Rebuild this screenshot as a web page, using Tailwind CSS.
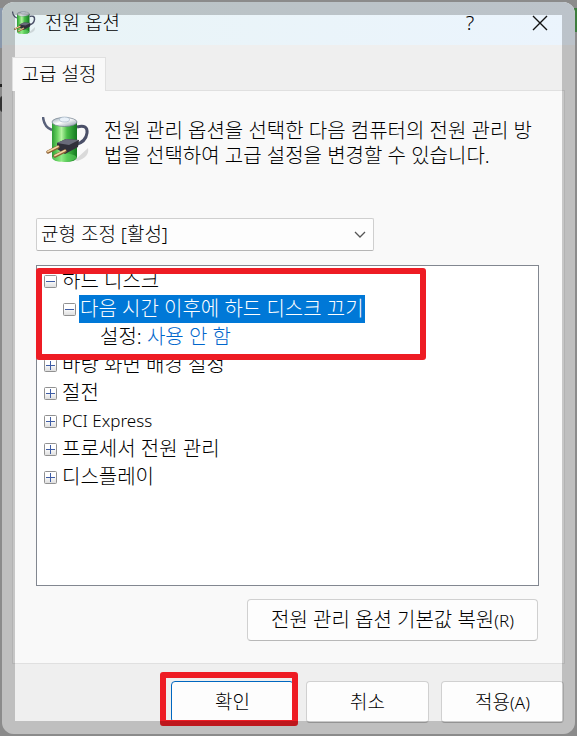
<!DOCTYPE html>
<html lang="ko">
<head>
    <meta charset="UTF-8">
    <meta name="viewport" content="width=device-width, initial-scale=1.0">
    <title>전원 옵션</title>
    <script src="https://cdn.jsdelivr.net/npm/@tailwindcss/browser@4"></script>
</head>
<body class="relative min-h-screen bg-[#8b8b8b] p-[2px] font-['Noto_Sans','Noto_Sans_CJK_KR',sans-serif] text-[19px] font-light text-black">
    <!-- Desktop behind the dialog -->
    <div class="absolute left-0 top-2 h-10 w-[3px] bg-[#8998ac]"></div>
    <div class="absolute left-0 top-[84px] h-[3px] w-[3px] bg-[#222]"></div>
    <div class="absolute left-0 top-[96px] h-4 w-[3px] rounded-l-full bg-[#333]"></div>
    <div class="absolute right-0 top-2 h-6 w-[3px] bg-[#3d7d3d]"></div>

    <!-- Shared icons -->
    <svg class="absolute size-0" aria-hidden="true">
        <defs>
            <linearGradient id="cell" x1="0" x2="1" y1="0" y2="0">
                <stop offset="0" stop-color="#2c9a35"/>
                <stop offset="0.2" stop-color="#63cf5c"/>
                <stop offset="0.38" stop-color="#b5f3a2"/>
                <stop offset="0.6" stop-color="#48bd48"/>
                <stop offset="1" stop-color="#12781f"/>
            </linearGradient>
            <linearGradient id="cap" x1="0" x2="1" y1="0" y2="1">
                <stop offset="0" stop-color="#8fa0ae"/>
                <stop offset="0.45" stop-color="#ffffff"/>
                <stop offset="1" stop-color="#8393a3"/>
            </linearGradient>
            <linearGradient id="toggle" x1="0" x2="0" y1="0" y2="1">
                <stop offset="0.4" stop-color="#ffffff"/>
                <stop offset="1" stop-color="#dcdcdc"/>
            </linearGradient>
        </defs>
        <symbol id="battery" viewBox="0 0 48 48">
            <path d="M33 44 L46 32 Q48 41 35 45 Z" fill="#000" opacity="0.12"/>
            <path d="M1 1 Q2 11 10 14" fill="none" stroke="#59617a" stroke-width="2.5"/>
            <path d="M10 6 V41 Q10 46 22.500 46 Q35 46 35 41 V6 Z" fill="url(#cell)"/>
            <ellipse cx="22.500" cy="41.500" rx="12" ry="4" fill="#6be06c" opacity="0.5"/>
            <ellipse cx="22.500" cy="6" rx="12.500" ry="4.500" fill="url(#cap)" stroke="#71808c" stroke-width="0.700"/>
            <ellipse cx="22.500" cy="3.500" rx="5" ry="2.500" fill="#e9f1f9" stroke="#9aacc0" stroke-width="0.600"/>
            <path d="M35 11 Q46 8 45 17 Q44 26 33 29" fill="none" stroke="#4b5068" stroke-width="3"/>
            <path d="M15 27 L24 23 L37 24 L36 31 L23 38 L15 33 Z" fill="#30303a"/>
            <path d="M15 27 L24 23 L37 24 L27 29 Z" fill="#696b7a"/>
            <path d="M16 31 L6 36 M23 35 L13 40" fill="none" stroke="#8b5e32" stroke-width="3.500" stroke-linecap="round"/>
            <path d="M16 30.500 L6 35.500 M23 34.500 L13 39.500" fill="none" stroke="#f3d3a1" stroke-width="1.800" stroke-linecap="round"/>
        </symbol>
        <symbol id="minus" viewBox="0 0 13 13">
            <rect x="0.500" y="0.500" width="12" height="12" rx="1" fill="url(#toggle)" stroke="#919191"/>
            <path d="M2 6.500 H11" stroke="#3f5da5"/>
        </symbol>
        <symbol id="plus" viewBox="0 0 13 13">
            <rect x="0.500" y="0.500" width="12" height="12" rx="1" fill="url(#toggle)" stroke="#919191"/>
            <path d="M2 6.500 H11 M6.500 2 V11" stroke="#3f5da5"/>
        </symbol>
    </svg>

    <main class="relative flex min-h-[calc(100vh-4px)] flex-col overflow-hidden rounded-xl bg-[#efefef]">
        <!-- Title bar -->
        <header class="flex h-[43px] items-center bg-linear-to-r from-[#e9f4f6] to-[#ebf4fd] pb-px pl-[10px] pr-[23px]">
            <svg class="size-6"><use href="#battery"/></svg>
            <h1 class="ml-[9px] flex-1">전원 옵션</h1>
            <button type="button" aria-label="도움말" class="mr-[50px] w-4 text-[20px]">?</button>
            <button type="button" aria-label="닫기" class="flex size-6 items-center justify-center">
                <svg class="size-4" viewBox="0 0 16 16"><path d="M1 1 L15 15 M15 1 L1 15" stroke="#111" stroke-width="1.400"/></svg>
            </button>
        </header>

        <div class="mx-[10px] mt-3 flex flex-1 flex-col">
            <div class="flex">
                <button type="button" class="relative z-1 -mb-px h-[34px] w-[94px] border border-b-0 border-[#e0e0e0] bg-[#f9f9f9]">고급 설정</button>
            </div>

            <!-- Tab page -->
            <section class="flex flex-1 flex-col border border-[#e0e0e0] bg-[#f9f9f9] pl-[23px] pr-[25px] pb-[22px] pt-[25px]">
                <div class="flex pl-[6px]">
                    <svg class="size-12 shrink-0"><use href="#battery"/></svg>
                    <p class="-mr-4 ml-[14px] pt-[2px] text-[20px] leading-[25px]">전원 관리 옵션을 선택한 다음 컴퓨터의 전원 관리 방<br>법을 선택하여 고급 설정을 변경할 수 있습니다.</p>
                </div>

                <div class="relative mt-[50px] w-[338px]">
                    <select aria-label="전원 관리 옵션" class="h-[33px] w-full appearance-none rounded-xs border border-[#cfcfcf] border-b-[#b5b5b5] bg-[#fdfdfd] pl-1 pr-8">
                        <option>균형 조정 [활성]</option>
                    </select>
                    <svg class="pointer-events-none absolute right-2 top-[13px] h-2 w-3" viewBox="0 0 12 8"><path d="M1 1 L6 6 L11 1" fill="none" stroke="#555" stroke-width="1.300"/></svg>
                </div>

                <!-- Settings tree -->
                <div class="relative mt-[14px] min-h-[321px] flex-1 border border-[#828790] bg-white pl-[7px] pt-px text-[20px] leading-[28px]">
                    <ul>
                        <li>
                            <div class="flex h-7 items-center gap-[5px]">
                                <button type="button" aria-label="접기"><svg class="size-[13px]"><use href="#minus"/></svg></button>
                                <span>하드 디스크</span>
                            </div>
                            <ul class="pl-[19px]">
                                <li>
                                    <div class="flex h-7 items-center gap-[3px]">
                                        <button type="button" aria-label="접기"><svg class="size-[13px]"><use href="#minus"/></svg></button>
                                        <span class="bg-[#0078d7] px-px text-white">다음 시간 이후에 하드 디스크 끄기</span>
                                    </div>
                                    <p class="h-7 pl-[37px]">설정: <a href="#" class="text-[#0066cc]">사용 안 함</a></p>
                                </li>
                            </ul>
                        </li>
                        <li class="flex h-7 items-center gap-[5px]">
                            <button type="button" aria-label="펼치기"><svg class="size-[13px]"><use href="#plus"/></svg></button>
                            <span>바탕 화면 배경 설정</span>
                        </li>
                        <li class="flex h-7 items-center gap-[5px]">
                            <button type="button" aria-label="펼치기"><svg class="size-[13px]"><use href="#plus"/></svg></button>
                            <span>절전</span>
                        </li>
                        <li class="flex h-7 items-center gap-[5px]">
                            <button type="button" aria-label="펼치기"><svg class="size-[13px]"><use href="#plus"/></svg></button>
                            <span class="text-[17px]">PCI Express</span>
                        </li>
                        <li class="flex h-7 items-center gap-[5px]">
                            <button type="button" aria-label="펼치기"><svg class="size-[13px]"><use href="#plus"/></svg></button>
                            <span>프로세서 전원 관리</span>
                        </li>
                        <li class="flex h-7 items-center gap-[5px]">
                            <button type="button" aria-label="펼치기"><svg class="size-[13px]"><use href="#plus"/></svg></button>
                            <span>디스플레이</span>
                        </li>
                    </ul>
                    <div class="pointer-events-none absolute -left-px top-[2px] h-[92px] w-[390px] rounded-[3px] border-6 border-[#ee1c24]"></div>
                </div>

                <button type="button" class="mr-px mt-[13px] h-[42px] w-[291px] self-end rounded border border-[#d0d0d0] border-b-[#b8b8b8] bg-[#fdfdfd] text-[20px]">전원 관리 옵션 기본값 복원<span class="text-[17px]">(R)</span></button>
            </section>
        </div>

        <!-- Dialog buttons -->
        <footer class="flex justify-end gap-3 pb-[11px] pr-[11px] pt-[17px]">
            <div class="relative">
                <button type="button" class="h-[42px] w-[123px] rounded border border-[#0067c0] bg-[#fdfdfd]">확인</button>
                <div class="pointer-events-none absolute -bottom-[3px] -left-[11px] -right-1 -top-[9px] rounded-[3px] border-6 border-[#ee1c24]"></div>
            </div>
            <button type="button" class="h-[42px] w-[123px] rounded border border-[#d0d0d0] border-b-[#b8b8b8] bg-[#fdfdfd]">취소</button>
            <button type="button" class="h-[42px] w-[123px] rounded border border-[#d0d0d0] border-b-[#b8b8b8] bg-[#fdfdfd]">적용<span class="text-[17px]">(A)</span></button>
        </footer>

        <!-- Shaded frame -->
        <div class="pointer-events-none absolute inset-0 border-13 border-black/20"></div>
    </main>
</body>
</html>
